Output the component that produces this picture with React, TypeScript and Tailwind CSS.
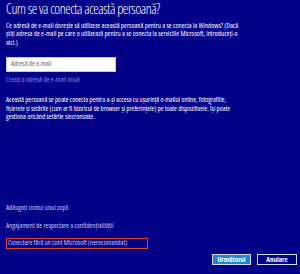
export default function App() {
  return (
    <div className="flex h-[274px] w-[300px] flex-col overflow-hidden bg-[#020087] px-[6px] font-['Open_Sans','Liberation_Sans',sans-serif] font-stretch-semi-condensed text-white">
      <h1 className="text-[14px] font-light leading-[18px] tracking-[-0.45px] font-stretch-condensed">
        Cum se va conecta această persoană?
      </h1>
      <p className="mt-[3.75px] whitespace-nowrap text-[7px] leading-[8.5px]">
        Ce adresă de e-mail dorește să utilizeze această persoană pentru a se conecta la Windows? (Dacă
        <br />
        știți adresa de e-mail pe care o utilizează pentru a se conecta la serviciile Microsoft, introduceți-o
        <br />
        aici.)
      </p>
      <div className="mt-[9.5px] flex h-[15px] w-[110px] items-center border border-[#c8c8c8] bg-white px-[4px] text-[7px] text-[#6b6b6b]">
        Adresă de e-mail
      </div>
      <a className="mt-[3.75px] text-[7px] leading-[8.5px] text-[#8585f5]">
        Creați o adresă de e-mail nouă
      </a>
      <p className="mt-[12px] whitespace-nowrap text-[7px] leading-[8.5px] tracking-[-0.05px]">
        Această persoană se poate conecta pentru a-și accesa cu ușurință e-mailul online, fotografiile,
        <br />
        fișierele și setările (cum ar fi istoricul de browser și preferințele) pe toate dispozitivele. Își poate
        <br />
        gestiona oricând setările sincronizate.
      </p>
      <div className="mt-auto flex flex-col items-start text-[7px] leading-[8.5px] text-[#c4c4f2]">
        <a>Adăugați contul unui copil</a>
        <a className="mt-[10px]">Angajament de respectare a confidențialității</a>
        <a className="mt-[7px] w-[142px] whitespace-nowrap border border-[#e0442f] px-[1px] py-[0.5px]">
          Conectare fără un cont Microsoft (nerecomandat)
        </a>
      </div>
      <div className="mb-[9px] mt-[5px] flex justify-end gap-[6px] text-[7px] font-bold leading-none">
        <button className="h-[11px] w-[39px] border border-[#d8d8e8] bg-[#1f86d4] text-white">
          Următorul
        </button>
        <button className="mr-[-3px] h-[11px] w-[40px] border border-[#d8d8e8] bg-[#020087] text-white">
          Anulare
        </button>
      </div>
    </div>
  );
}
